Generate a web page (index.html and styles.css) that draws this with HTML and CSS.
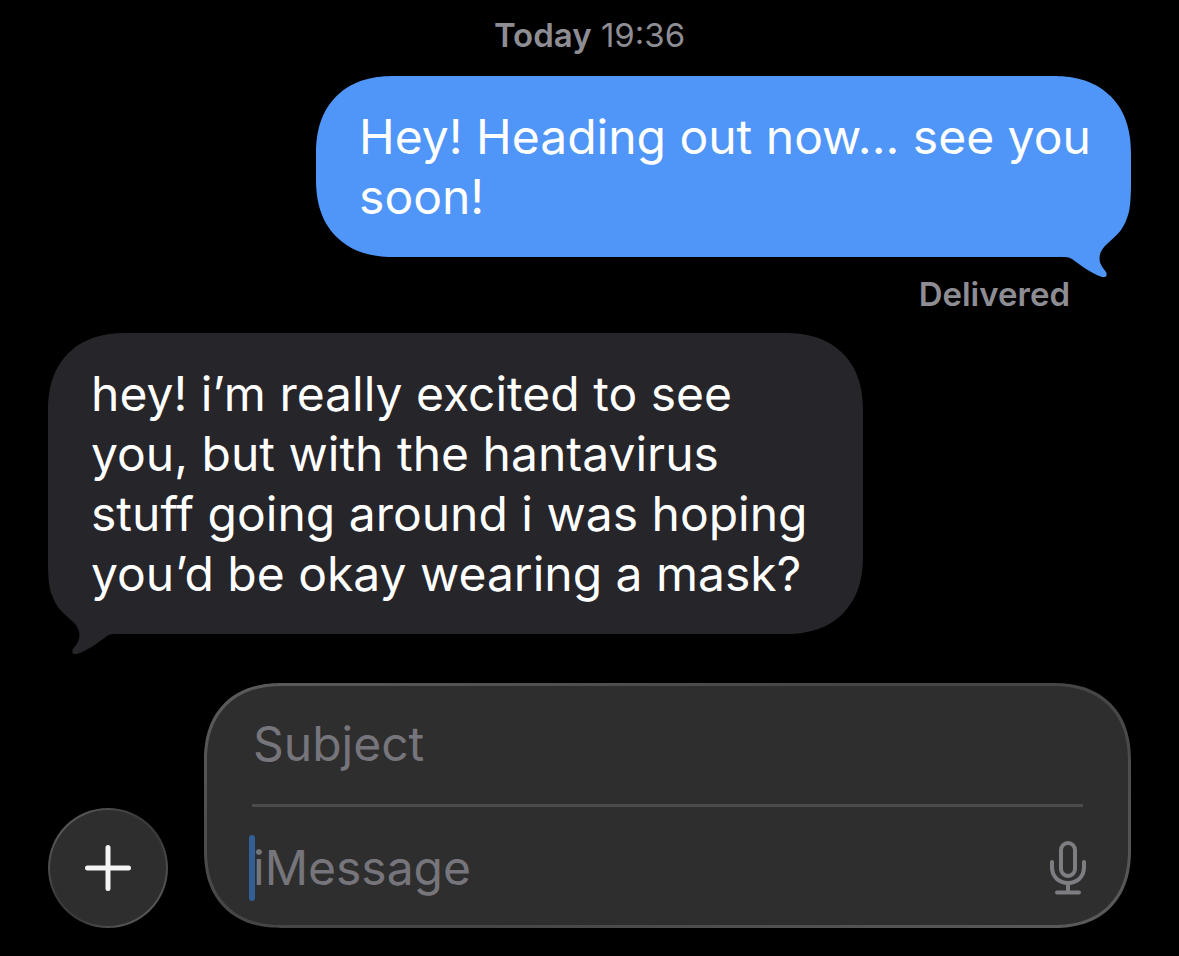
FILE: index.html
```html
<!DOCTYPE html>
<html lang="en">
<head>
    <meta charset="UTF-8">
    <meta name="viewport" content="width=device-width, initial-scale=1.0">
    <title>Messages</title>
    <link rel="stylesheet" href="styles.css">
</head>
<body>
    <main class="chat">
        <p class="timestamp"><strong>Today</strong> 19:36</p>

        <div class="bubble sent">
            <p>Hey! Heading out now... see you soon!</p>
            <svg class="tail" viewBox="0 0 70 100" aria-hidden="true">
                <path d="M70 2 C70 24 69 34 66 41 C62 53 56 58 46 67 C38 74 36 83 42 91 L45 95 C47 99 44 101 41 100 C35 98 28 94 22 90 L11 82 Q8 80 4 80 L0 80 L0 2 Z"/>
            </svg>
        </div>
        <p class="status">Delivered</p>

        <div class="bubble received">
            <p>hey! i’m really excited to see you, but with the hantavirus stuff going around i was hoping you’d be okay wearing a mask?</p>
            <svg class="tail" viewBox="0 0 70 100" aria-hidden="true">
                <path d="M70 2 C70 24 69 34 66 41 C62 53 56 58 46 67 C38 74 36 83 42 91 L45 95 C47 99 44 101 41 100 C35 98 28 94 22 90 L11 82 Q8 80 4 80 L0 80 L0 2 Z"/>
            </svg>
        </div>
    </main>

    <form class="composer">
        <button type="button" class="add" aria-label="Add attachment">
            <svg viewBox="0 0 46 46" aria-hidden="true">
                <path d="M23 2.500V43.500M2.500 23H43.500"/>
            </svg>
        </button>
        <div class="fields">
            <div class="row subject">
                <input type="text" placeholder="Subject" aria-label="Subject">
            </div>
            <div class="row message">
                <span class="caret"></span>
                <input type="text" placeholder="iMessage" aria-label="iMessage">
                <button type="button" class="mic" aria-label="Dictate">
                    <svg viewBox="0 0 36 54" aria-hidden="true">
                        <rect x="11" y="2" width="14" height="33" rx="7"/>
                        <path d="M2 21V26C2 36 9 42 18 42C27 42 34 36 34 26V21M18 42V51M7 51.500H29"/>
                    </svg>
                </button>
            </div>
        </div>
    </form>
</body>
</html>
```
FILE: styles.css
```css
* {
    box-sizing: border-box;
}

body {
    margin: 0;
    min-height: 100vh;
    padding: 15px 48px 28px;
    display: flex;
    flex-direction: column;
    justify-content: space-between;
    background: #000;
    color: #fff;
    font-family: Inter, "Liberation Sans", sans-serif;
    font-size: 48px;
    line-height: 60px;
}

p {
    margin: 0;
}

.chat {
    display: flex;
    flex-direction: column;
}

.timestamp,
.status {
    color: #8d8d93;
    font-size: 33px;
    line-height: 40px;
}

.timestamp {
    text-align: center;
    margin-bottom: 21px;
}

.timestamp strong,
.status {
    font-weight: 600;
}

/* Bubbles */
.bubble {
    position: relative;
    isolation: isolate;
    width: 75.25%;
    padding: 31px 36px 30px 43px;
    border-radius: 66px / 70px;
}

.sent {
    align-self: flex-end;
    background: #4f96f8;
    fill: #4f96f8;
}

.received {
    align-self: flex-start;
    background: #26252a;
    fill: #26252a;
}

.tail {
    position: absolute;
    z-index: -1;
    width: 70px;
    height: 100px;
    right: 0;
    bottom: -20px;
}

.received .tail {
    right: auto;
    left: 0;
    transform: scaleX(-1);
}

.status {
    align-self: flex-end;
    margin: 17px 61px 19px 0;
}

/* Composer */
.composer {
    display: flex;
    align-items: flex-end;
    gap: 36px;
}

.composer button {
    flex: none;
    display: flex;
    align-items: center;
    justify-content: center;
    padding: 0;
    border: none;
    background: none;
}

.composer svg {
    fill: none;
    stroke-linecap: round;
}

.composer .add {
    width: 120px;
    height: 120px;
    border: 2px solid transparent;
    border-radius: 50%;
    background: linear-gradient(#2e2e2e, #2e2e2e) padding-box,
                linear-gradient(135deg, #666, #3c3c3c 40%, #3c3c3c 60%, #666) border-box;
}

.add svg {
    width: 46px;
    height: 46px;
    stroke: #f4f4f4;
    stroke-width: 5;
}

.fields {
    flex: 1;
    padding: 0 45px;
    border: 3px solid transparent;
    border-radius: 66px / 70px;
    background: linear-gradient(#2e2e2e, #2e2e2e) padding-box,
                linear-gradient(160deg, #5c5c5c, #464646 40%, #464646 60%, #5c5c5c) border-box;
}

/* smoother, squarer corners where the browser can draw them */
@supports (corner-shape: superellipse(1.2)) {
    .bubble,
    .fields {
        border-radius: 78px;
        corner-shape: superellipse(1.2);
    }
}

.row {
    position: relative;
    display: flex;
    align-items: center;
    height: 118px;
}

.subject {
    height: 121px;
    padding-bottom: 3px;
    border-bottom: 3px solid #4b4b4b;
}

/* the mic hangs slightly past the divider */
.message {
    padding-top: 3px;
    margin-right: -3px;
}

.row input {
    flex: 1;
    min-width: 0;
    height: 66px;
    padding: 0 1px;
    border: none;
    outline: none;
    background: none;
    color: #fff;
    font: inherit;
}

.row input::placeholder {
    color: #76757b;
    opacity: 1;
}

.caret {
    position: absolute;
    left: -3px;
    width: 6px;
    height: 66px;
    border-radius: 3px;
    background: #315f96;
}

.mic svg {
    width: 36px;
    height: 54px;
    stroke: #7e7e82;
    stroke-width: 4;
}
```
